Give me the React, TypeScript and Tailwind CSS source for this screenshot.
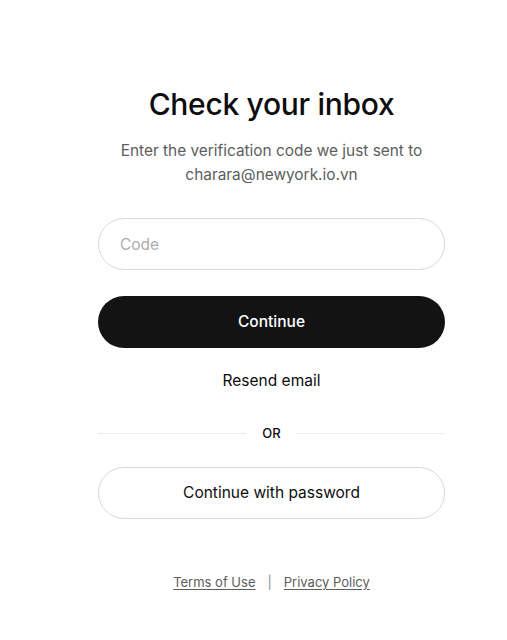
export default function App() {
  return (
    <div className="min-h-[640px] bg-white font-['Inter',sans-serif] text-[#0d0d0d]">
      <div className="ml-[98px] flex w-[347px] flex-col items-center pt-[84px]">
        <h1 className="text-[30px] font-medium leading-[40px] tracking-[-0.3px]">Check your inbox</h1>
        <p className="mt-[15px] text-center text-[15.4px] leading-[24px] text-[#5d5d5d]">
          Enter the verification code we just sent to
          <br />
          charara@newyork.io.vn
        </p>

        <input
          placeholder="Code"
          className="mt-[31px] h-[52px] w-full rounded-full border border-[#d9d9d9] px-[21px] text-[15.5px] outline-none placeholder:text-[#acacac]"
        />
        <button className="mt-[26px] h-[52px] w-full rounded-full bg-[#131313] text-[15.5px] font-medium text-white">
          Continue
        </button>
        <button className="mt-[21px] text-[15.5px] leading-[24px]">Resend email</button>

        <div className="mt-[30px] flex w-full items-center gap-[16px]">
          <div className="h-px flex-1 bg-[#ececec]" />
          <span className="text-[13px] font-medium leading-[20px]">OR</span>
          <div className="h-px flex-1 bg-[#ececec]" />
        </div>

        <button className="mt-[24px] h-[52px] w-full rounded-full border border-[#d9d9d9] text-[15.5px]">
          Continue with password
        </button>

        <div className="mt-[53px] flex items-center gap-[12px] text-[13px] leading-[20px] text-[#5d5d5d]">
          <a className="underline underline-offset-2">Terms of Use</a>
          <span className="text-[#8a8a8a]">|</span>
          <a className="underline underline-offset-2">Privacy Policy</a>
        </div>
      </div>
    </div>
  );
}
